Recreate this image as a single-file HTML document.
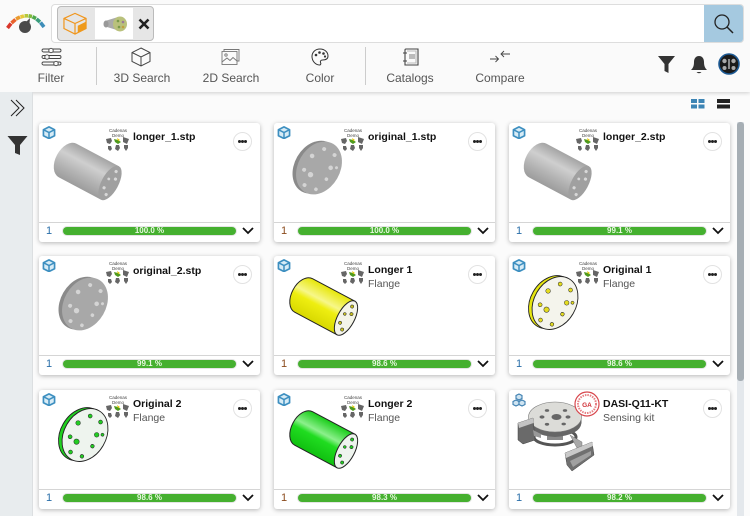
<!DOCTYPE html>
<html><head><meta charset="utf-8">
<style>
html,body{margin:0;padding:0}
body{width:750px;height:516px;overflow:hidden;position:relative;background:#fbfbfb;font-family:"Liberation Sans",sans-serif;color:#222}
.a{position:absolute}
.tl{position:absolute;top:71px;font-size:12px;line-height:14px;color:#555;text-align:center;white-space:nowrap}
.card{position:absolute;width:221px;height:119px;background:#fff;border-radius:3px;box-shadow:0 1px 5px rgba(0,0,0,.28)}
.card svg.m{position:absolute;left:0;top:0;width:221px;height:119px;filter:blur(.3px)}
.t{position:absolute;left:94px;top:8px;font-size:10.5px;line-height:13px;font-weight:bold;color:#111;white-space:nowrap}
.s{position:absolute;left:94px;top:22px;font-size:10.5px;line-height:13px;color:#555;white-space:nowrap}
.lg{position:absolute;left:61px;top:5px;width:36px;font-size:4.5px;line-height:5px;text-align:center;color:#444}
.dots{position:absolute;left:194px;top:9px;width:17px;height:17px;border:1px solid #e2e2e2;border-radius:50%;background:#fff}
.dots i{position:absolute;top:7px;width:3px;height:3px;background:#222;border-radius:50%}
.ln{position:absolute;left:0;right:0;top:99px;height:1px;background:#d5d5d5}
.n{position:absolute;left:7px;top:101px;font-size:11px;line-height:14px;color:#2a6ea8}
.n.b{color:#8a4a1c}
.pb{position:absolute;left:24px;top:104px;width:173px;height:8px;border-radius:4px;background:#45b02f;box-shadow:0 0 0 1px #e4e4e4;color:#e8f8e0;font-size:8px;line-height:8px;text-align:center;font-weight:bold}
.ch{position:absolute;left:202px;top:103px;width:14px;height:9px}
</style></head><body>
<svg width="0" height="0" style="position:absolute">
<defs>
<linearGradient id="gc" x1="0" y1="0" x2="0" y2="1"><stop offset="0" stop-color="#a4a4a4"/><stop offset=".35" stop-color="#cfcfcf"/><stop offset=".7" stop-color="#b2b2b2"/><stop offset="1" stop-color="#9c9c9c"/></linearGradient>
<linearGradient id="gy" x1="0" y1="0" x2="0" y2="1"><stop offset="0" stop-color="#e6e608"/><stop offset=".38" stop-color="#f7f78a"/><stop offset=".55" stop-color="#eeee10"/><stop offset="1" stop-color="#d8d800"/></linearGradient>
<linearGradient id="gg" x1="0" y1="0" x2="0" y2="1"><stop offset="0" stop-color="#18cc18"/><stop offset=".38" stop-color="#8cf08c"/><stop offset=".55" stop-color="#20dc20"/><stop offset="1" stop-color="#10c010"/></linearGradient>
<g id="cyl"><path d="M0 -19 H-48 A12 19 0 0 0 -48 19 H0 Z" style="fill:var(--f);stroke:var(--l);stroke-width:var(--w)"/><ellipse rx="8.500" ry="19" style="fill:var(--e);stroke:var(--l);stroke-width:var(--w)"/><g style="fill:var(--h);stroke:var(--l);stroke-width:.5"><circle cx="0" cy="-13" r="1.600"/><circle cx="3" cy="-6" r="1.600"/><circle cx="-3" cy="7" r="1.600"/><circle cx="2" cy="12" r="1.600"/><circle cx="-3" cy="-3" r="1.400"/></g></g>
<g id="dsk"><ellipse cx="-3.500" cy="1" rx="21" ry="28" style="fill:var(--f);stroke:var(--l);stroke-width:var(--w)"/><ellipse rx="21" ry="28" style="fill:var(--e);stroke:var(--l);stroke-width:var(--w)"/><g style="fill:var(--h);stroke:var(--l);stroke-width:.5"><circle cx="-5" cy="-19" r="2"/><circle cx="7" cy="-19" r="2"/><circle cx="-12" cy="-7" r="2.300"/><circle cx="10" cy="-6" r="2.300"/><circle cx="15" cy="-9" r="1.500"/><circle cx="-12" cy="9" r="2"/><circle cx="-4" cy="10" r="2.700"/><circle cx="12" cy="6" r="1.800"/><circle cx="-4" cy="22" r="2"/><circle cx="8" cy="20" r="1.800"/></g></g>
<symbol id="cube" viewBox="0 0 14 14"><path d="M7 1 L13 4 V10.500 L7 13.500 L1 10.500 V4 Z" fill="#d8ecf6" stroke="#3d8fc0" stroke-width="1.800" stroke-linejoin="round"/><path d="M1 4 L7 7 L13 4 M7 7 V13.500" fill="none" stroke="#3d8fc0" stroke-width="1.600"/></symbol>
<symbol id="cubes" viewBox="0 0 14 14"><g fill="#cfe4f1" stroke="#3d7fb0" stroke-width="1.100"><path d="M7 1 L10 2.500 V5.500 L7 7 L4 5.500 V2.500 Z"/><path d="M4 7 L7 8.500 V11.500 L4 13 L1 11.500 V8.500 Z"/><path d="M10 7 L13 8.500 V11.500 L10 13 L7 11.500 V8.500 Z"/></g></symbol>
<symbol id="logo" viewBox="0 0 24 14"><g fill="#666"><path d="M0 2l5-1 1 3-2 3-3-1z"/><path d="M17 0l6 2-2 5-4-2z"/><path d="M2 9h3l1 3-2 2-2-2z"/><path d="M10 8h3l1 3-2 3-3-2z"/><path d="M18 8h4v3l-2 3-2-3z"/></g><path d="M8 2l4 1 3 2-3 2-3-2z" fill="#4f9a1e"/><path d="M11 1l3 2-2 1z" fill="#e8c800"/></symbol>
<symbol id="chev" viewBox="0 0 14 9"><path d="M2 2 L7 7 L12 2" fill="none" stroke="#111" stroke-width="1.800"/></symbol>
</defs>
</svg>

<!-- top bar -->
<div class="a" style="left:0;top:0;width:750px;height:92px;background:#fafafa;box-shadow:0 1px 4px rgba(0,0,0,.18)"></div>
<svg class="a" style="left:5px;top:10px" width="44" height="28" viewBox="0 0 44 28">
<g fill="none" stroke-width="3.600">
<path d="M2.500 18 L6 13.500" stroke="#d9362b"/><path d="M6.500 13 L10.500 9.500" stroke="#e8612c"/><path d="M11 9 L15 7" stroke="#eb9a2e"/><path d="M15.500 7 L19 6" stroke="#e6c93a"/><path d="M19.500 5.800 L23 5.800" stroke="#b5c83a"/><path d="M23.500 5.800 L27 6.500" stroke="#7fb93c"/><path d="M27.500 6.800 L31 8.500" stroke="#4ea84a"/><path d="M31.500 9 L35 12" stroke="#3a9c7c"/><path d="M35.500 12.500 L39 17" stroke="#3d8db8"/>
</g>
<circle cx="20" cy="17" r="6" fill="#4a4a4a"/><path d="M21 12 L25 8 L24.500 14Z" fill="#4a4a4a"/>
</svg>
<div class="a" style="left:51px;top:4px;width:691px;height:37px;background:#fff;border:1px solid #ddd;border-radius:4px"></div>
<div class="a" style="left:704px;top:5px;width:39px;height:37px;background:#a5c9e0;border-radius:0 3px 3px 0"></div>
<svg class="a" style="left:712px;top:12px" width="24" height="24" viewBox="0 0 24 24"><circle cx="10" cy="10" r="7" fill="none" stroke="#222" stroke-width="1.300"/><path d="M15 15 L21 21" stroke="#222" stroke-width="1.500"/></svg>
<div class="a" style="left:57px;top:6px;width:95px;height:33px;background:#e6e6e6;border:1px solid #bbb;border-radius:4px"></div>
<div class="a" style="left:95px;top:8px;width:38px;height:31px;background:#fff"></div>
<svg class="a" style="left:62px;top:12px" width="26" height="23" viewBox="0 0 28 25"><path d="M2 7 L14 1.500 L26 7 V18 L14 24 L2 18 Z" fill="none" stroke="#f0961e" stroke-width="1.300"/><path d="M2 7 L14 12.500 L26 7 M14 12.500 V24" fill="none" stroke="#f0961e" stroke-width="1.300"/><path d="M17 15 L26 10.500 V18 L17 22.500 Z" fill="#ee9a1c"/></svg>
<svg class="a" style="left:102px;top:14px" width="26" height="20" viewBox="0 0 26 20"><path d="M3 7 L16 3 L18 17 L5 13 Z" fill="#aaa"/><ellipse cx="4" cy="10" rx="2.500" ry="3.500" fill="#999"/><ellipse cx="18" cy="10" rx="7" ry="7.500" fill="#b9c17c"/><circle cx="16" cy="7" r="1.300" fill="#7a9a4a"/><circle cx="21" cy="8" r="1.300" fill="#9a7a9a"/><circle cx="17" cy="13" r="1.300" fill="#7a9a4a"/><circle cx="21" cy="13" r="1.300" fill="#c0a040"/></svg>
<svg class="a" style="left:138px;top:18px" width="12" height="12" viewBox="0 0 12 12"><path d="M1.500 1.500 L10.500 10.500 M10.500 1.500 L1.500 10.500" stroke="#222" stroke-width="2.600"/></svg>

<!-- toolbar icons -->
<svg class="a" style="left:41px;top:47px" width="21" height="20" viewBox="0 0 21 20" fill="none" stroke="#444" stroke-width=".9"><rect x="1" y="2" width="19" height="3" rx="1.500"/><rect x="1" y="8.500" width="19" height="3" rx="1.500"/><rect x="1" y="15" width="19" height="3" rx="1.500"/><circle cx="10" cy="3.500" r="2.200" fill="#fafafa"/><circle cx="6" cy="10" r="2.200" fill="#fafafa"/><circle cx="15" cy="16.500" r="2.200" fill="#fafafa"/></svg>
<svg class="a" style="left:131px;top:47px" width="20" height="20" viewBox="0 0 20 20" fill="none" stroke="#444" stroke-width="1"><path d="M10 1 L19 5.500 V14.500 L10 19 L1 14.500 V5.500 Z M1 5.500 L10 10 L19 5.500 M10 10 V19"/></svg>
<svg class="a" style="left:221px;top:48px" width="19" height="18" viewBox="0 0 19 18" fill="none" stroke="#777" stroke-width=".9"><path d="M3 3 V1.500 H18 V13 H16"/><rect x="1" y="3.500" width="15" height="13"/><circle cx="5" cy="7" r="1.200"/><path d="M1 14 L6 10 L9 12.500 L12 9.500 L16 13"/></svg>
<svg class="a" style="left:311px;top:48px" width="18" height="18" viewBox="0 0 18 18" fill="none" stroke="#333" stroke-width="1"><path d="M9 1 C4 1 1 4.500 1 8.500 C1 13 4.500 17 8.500 17 C10 17 10 15.500 9.500 14.500 C9 13 10 12 11.500 12 C15 12 17 11 17 8 C17 4 13.500 1 9 1 Z"/><g fill="#333" stroke="none"><circle cx="5" cy="7" r="1.300"/><circle cx="8.500" cy="4.500" r="1.300"/><circle cx="12.500" cy="5.500" r="1.300"/><circle cx="14" cy="8.500" r="1.100"/></g></svg>
<svg class="a" style="left:402px;top:48px" width="18" height="19" viewBox="0 0 18 19" fill="none" stroke="#444" stroke-width="1.100"><path d="M3 2 Q3 1 4 1 H16 V17 H3 V2"/><path d="M1 5 H5 M1 13 H5"/><rect x="7" y="6" width="6" height="5" fill="#bbb" stroke="none"/><path d="M5 3 H14 V15 H5" stroke="#bbb"/></svg>
<svg class="a" style="left:489px;top:50px" width="22" height="14" viewBox="0 0 22 14" fill="none" stroke="#444" stroke-width=".9"><path d="M1 9 H9 M6.500 6 L9.500 9 L6.500 12"/><path d="M21 4 H12 M15 1 L12 4 L15 7"/></svg>

<div class="tl" style="left:37px;width:28px">Filter</div>
<div class="tl" style="left:112px;width:60px">3D Search</div>
<div class="tl" style="left:201px;width:60px">2D Search</div>
<div class="tl" style="left:303px;width:34px">Color</div>
<div class="tl" style="left:385px;width:50px">Catalogs</div>
<div class="tl" style="left:473px;width:54px">Compare</div>
<div class="a" style="left:96px;top:47px;width:1px;height:38px;background:#ccc"></div>
<div class="a" style="left:365px;top:47px;width:1px;height:38px;background:#ccc"></div>

<svg class="a" style="left:657px;top:55px" width="19" height="19" viewBox="0 0 19 19"><path d="M1 1 H18 L11.500 9 V18 L7.500 16 V9 Z" fill="#333"/></svg>
<svg class="a" style="left:690px;top:55px" width="18" height="20" viewBox="0 0 18 20"><path d="M9 1 C5.500 1 4 4 4 7 C4 11 3 13 1 15 H17 C15 13 14 11 14 7 C14 4 12.500 1 9 1 Z" fill="#333"/><path d="M6.500 17 H11.500 Q9 19.500 6.500 17Z" fill="#333"/></svg>
<svg class="a" style="left:718px;top:53px" width="22" height="22" viewBox="0 0 22 22"><circle cx="11" cy="11" r="10" fill="#1a1a1a" stroke="#1d5a94" stroke-width="1.600"/><g fill="#aaa"><circle cx="6.500" cy="8" r="2.200"/><circle cx="15.500" cy="8" r="2.200"/><circle cx="6.500" cy="15" r="2"/><circle cx="15.500" cy="15" r="2"/></g><path d="M11 6 V16" stroke="#fff" stroke-width="1"/></svg>

<!-- sidebar -->
<div class="a" style="left:0;top:92px;width:32px;height:424px;background:#e8ecee;border-right:1px solid #dcdfe1"></div>
<svg class="a" style="left:10px;top:99px" width="16" height="18" viewBox="0 0 16 18" fill="none" stroke="#222" stroke-width="1"><path d="M1 1 L9 9 L1 17"/><path d="M6 1 L14 9 L6 17"/></svg>
<svg class="a" style="left:7px;top:135px" width="21" height="21" viewBox="0 0 21 21"><path d="M0.500 1 H20.500 L13 10 V20 L8 18 V10 Z" fill="#333"/></svg>

<!-- view toggles -->
<svg class="a" style="left:691px;top:99px" width="14" height="10" viewBox="0 0 14 10" fill="#3d85b5"><rect x="0" y="0" width="6" height="4"/><rect x="7.500" y="0" width="6" height="4"/><rect x="0" y="5.500" width="6" height="4"/><rect x="7.500" y="5.500" width="6" height="4"/></svg>
<svg class="a" style="left:717px;top:99px" width="13" height="10" viewBox="0 0 13 10" fill="#222"><rect x="0" y="0" width="13" height="4"/><rect x="0" y="5.500" width="13" height="4"/></svg>

<!-- scrollbar -->
<div class="a" style="left:737px;top:122px;width:7px;height:394px;background:#e4e8ec"></div>
<div class="a" style="left:737px;top:122px;width:7px;height:259px;background:#a6aeb4;border-radius:3px"></div>

<!-- Row 1 -->
<div class="card" style="left:39px;top:123px">
<svg class="m" viewBox="0 0 221 119"><use href="#cube" x="3.500" y="3" width="13" height="13"/><use href="#logo" x="67" y="14" width="24" height="14"/>
<use href="#cyl" transform="translate(71,60) rotate(28)" style="--f:url(#gc);--e:#a0a0a0;--h:#d8d8d8;--l:none;--w:0"/></svg>
<div class="lg">Cadenas<br>Demo</div><div class="t">longer_1.stp</div>
<div class="dots"><i style="left:3.800px"></i><i style="left:7px"></i><i style="left:10.200px"></i></div><div class="ln"></div><div class="n">1</div><div class="pb">100.0 %</div><svg class="ch"><use href="#chev" width="14" height="9"/></svg>
</div>
<div class="card" style="left:274px;top:123px">
<svg class="m" viewBox="0 0 221 119"><use href="#cube" x="3.500" y="3" width="13" height="13"/><use href="#logo" x="67" y="14" width="24" height="14"/>
<use href="#dsk" transform="translate(45,45) rotate(30)" style="--f:#8a8a8a;--e:#a8a8a8;--h:#d4d4d4;--l:none;--w:0"/></svg>
<div class="lg">Cadenas<br>Demo</div><div class="t">original_1.stp</div>
<div class="dots"><i style="left:3.800px"></i><i style="left:7px"></i><i style="left:10.200px"></i></div><div class="ln"></div><div class="n b">1</div><div class="pb">100.0 %</div><svg class="ch"><use href="#chev" width="14" height="9"/></svg>
</div>
<div class="card" style="left:509px;top:123px">
<svg class="m" viewBox="0 0 221 119"><use href="#cube" x="3.500" y="3" width="13" height="13"/><use href="#logo" x="67" y="14" width="24" height="14"/>
<use href="#cyl" transform="translate(71,60) rotate(28)" style="--f:url(#gc);--e:#a0a0a0;--h:#d8d8d8;--l:none;--w:0"/></svg>
<div class="lg">Cadenas<br>Demo</div><div class="t">longer_2.stp</div>
<div class="dots"><i style="left:3.800px"></i><i style="left:7px"></i><i style="left:10.200px"></i></div><div class="ln"></div><div class="n">1</div><div class="pb">99.1 %</div><svg class="ch"><use href="#chev" width="14" height="9"/></svg>
</div>

<!-- Row 2 -->
<div class="card" style="left:39px;top:256px">
<svg class="m" viewBox="0 0 221 119"><use href="#cube" x="3.500" y="3" width="13" height="13"/><use href="#logo" x="67" y="14" width="24" height="14"/>
<use href="#dsk" transform="translate(46,48) rotate(30)" style="--f:#8a8a8a;--e:#a8a8a8;--h:#d4d4d4;--l:none;--w:0"/></svg>
<div class="lg">Cadenas<br>Demo</div><div class="t" style="top:9px">original_2.stp</div>
<div class="dots"><i style="left:3.800px"></i><i style="left:7px"></i><i style="left:10.200px"></i></div><div class="ln"></div><div class="n">1</div><div class="pb">99.1 %</div><svg class="ch"><use href="#chev" width="14" height="9"/></svg>
</div>
<div class="card" style="left:274px;top:256px">
<svg class="m" viewBox="0 0 221 119"><use href="#cube" x="3.500" y="3" width="13" height="13"/><use href="#logo" x="67" y="14" width="24" height="14"/>
<use href="#cyl" transform="translate(72,62) rotate(28)" style="--f:url(#gy);--e:#f4f4e8;--h:#c8c020;--l:#222;--w:1"/></svg>
<div class="lg">Cadenas<br>Demo</div><div class="t">Longer 1</div><div class="s">Flange</div>
<div class="dots"><i style="left:3.800px"></i><i style="left:7px"></i><i style="left:10.200px"></i></div><div class="ln"></div><div class="n b">1</div><div class="pb">98.6 %</div><svg class="ch"><use href="#chev" width="14" height="9"/></svg>
</div>
<div class="card" style="left:509px;top:256px">
<svg class="m" viewBox="0 0 221 119"><use href="#cube" x="3.500" y="3" width="13" height="13"/><use href="#logo" x="67" y="14" width="24" height="14"/>
<use href="#dsk" transform="translate(46,47) rotate(30)" style="--f:#e6e610;--e:#f4f4ec;--h:#e4dc20;--l:#222;--w:.9"/></svg>
<div class="lg">Cadenas<br>Demo</div><div class="t">Original 1</div><div class="s">Flange</div>
<div class="dots"><i style="left:3.800px"></i><i style="left:7px"></i><i style="left:10.200px"></i></div><div class="ln"></div><div class="n">1</div><div class="pb">98.6 %</div><svg class="ch"><use href="#chev" width="14" height="9"/></svg>
</div>

<!-- Row 3 -->
<div class="card" style="left:39px;top:390px">
<svg class="m" viewBox="0 0 221 119"><use href="#cube" x="3.500" y="3" width="13" height="13"/><use href="#logo" x="67" y="14" width="24" height="14"/>
<use href="#dsk" transform="translate(46,45) rotate(30)" style="--f:#1fd01f;--e:#eef4ee;--h:#22cc22;--l:#222;--w:.9"/></svg>
<div class="lg">Cadenas<br>Demo</div><div class="t">Original 2</div><div class="s">Flange</div>
<div class="dots"><i style="left:3.800px"></i><i style="left:7px"></i><i style="left:10.200px"></i></div><div class="ln"></div><div class="n">1</div><div class="pb">98.6 %</div><svg class="ch"><use href="#chev" width="14" height="9"/></svg>
</div>
<div class="card" style="left:274px;top:390px">
<svg class="m" viewBox="0 0 221 119"><use href="#cube" x="3.500" y="3" width="13" height="13"/><use href="#logo" x="67" y="14" width="24" height="14"/>
<use href="#cyl" transform="translate(72,61) rotate(28)" style="--f:url(#gg);--e:#eef4ee;--h:#22cc22;--l:#222;--w:1"/></svg>
<div class="lg">Cadenas<br>Demo</div><div class="t">Longer 2</div><div class="s">Flange</div>
<div class="dots"><i style="left:3.800px"></i><i style="left:7px"></i><i style="left:10.200px"></i></div><div class="ln"></div><div class="n b">1</div><div class="pb">98.3 %</div><svg class="ch"><use href="#chev" width="14" height="9"/></svg>
</div>
<div class="card" style="left:509px;top:390px">
<svg class="m" viewBox="0 0 221 119"><use href="#cubes" x="3" y="3" width="14" height="14"/>
<ellipse cx="46" cy="47" rx="21" ry="8" fill="#fff" stroke="#555" stroke-width="3"/>
<path d="M38 38 H54 V50 H38Z" fill="#8a8a8a"/>
<path d="M19.500 29 V33 Q21 45 46 47 Q71 45 72.500 33 V29Z" fill="#666"/>
<ellipse cx="46" cy="27" rx="26.500" ry="15" fill="#dcdcd8" stroke="#777" stroke-width=".6"/>
<g fill="#666"><ellipse cx="47.500" cy="27" rx="5" ry="3"/><ellipse cx="33" cy="27" rx="2.500" ry="1.600"/><ellipse cx="59" cy="27" rx="2.500" ry="1.600"/><ellipse cx="38" cy="20.500" rx="2.200" ry="1.400"/><ellipse cx="56" cy="20.500" rx="2.200" ry="1.400"/><ellipse cx="38" cy="34.300" rx="2.200" ry="1.400"/><ellipse cx="54.700" cy="34" rx="2.200" ry="1.400"/></g>
<path d="M9 33 L24 28 L26 50 L14 54 L9 50Z" fill="#6a6a6a" stroke="#444" stroke-width=".5"/>
<path d="M9 33 L24 28 L24.500 33 L10 38Z" fill="#c4c4c4"/>
<path d="M24 40 L32 44 L32 48 L25 46Z" fill="#999"/>
<path d="M61 45 L73 52 L73 60 L68 58Z" fill="#a8a8a8" stroke="#666" stroke-width=".4"/>
<path d="M56 63 L83 52 L85 65 L63 81 L58 75Z" fill="#707070" stroke="#444" stroke-width=".5"/>
<path d="M56 63 L83 52 L84 56 L57 68Z" fill="#c9c9c9"/>
<path d="M61 71 L82 61 L82 65 L64 77Z" fill="#a0a0a0"/>
<circle cx="78" cy="14" r="12" fill="#fff" stroke="#d8474d" stroke-width="1.200"/><circle cx="78" cy="14" r="9" fill="none" stroke="#e67f83" stroke-width="2" stroke-dasharray="1.500 1"/><text x="78" y="17" font-size="6.500" font-weight="bold" fill="#cf2e35" text-anchor="middle" font-family="Liberation Sans, sans-serif">GA</text></svg>
<div class="t">DASI-Q11-KT</div><div class="s">Sensing kit</div>
<div class="dots"><i style="left:3.800px"></i><i style="left:7px"></i><i style="left:10.200px"></i></div><div class="ln"></div><div class="n">1</div><div class="pb">98.2 %</div><svg class="ch"><use href="#chev" width="14" height="9"/></svg>
</div>
</body></html>
